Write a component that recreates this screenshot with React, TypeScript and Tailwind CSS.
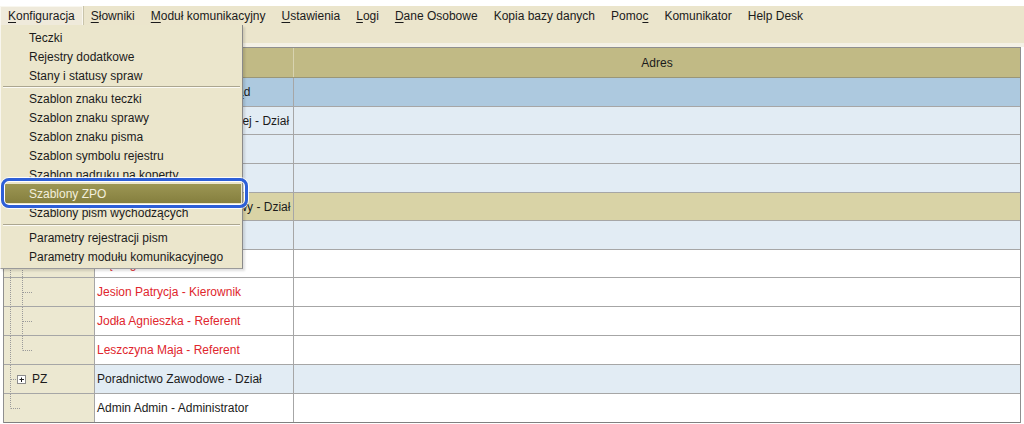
import React from "react";

type Row = {
    h: string;
    bg: string;
    text: string;
    red?: boolean;
    tree?: "child" | "lastChild" | "node" | "last" | "none";
    label?: string;
};

const rows: Row[] = [
    { h: "h-[29px]", bg: "bg-[#adc9df]", text: "Grodzki Urząd Pracy - Urząd" },
    { h: "h-[28px]", bg: "bg-[#e2ecf4]", text: "Centrum Pomocy Społecznej - Dział" },
    { h: "h-[29px]", bg: "bg-[#e2ecf4]", text: "Kowalski Jan - Kierownik" },
    { h: "h-[29px]", bg: "bg-[#e2ecf4]", text: "Nowak Anna - Referent" },
    { h: "h-[28px]", bg: "bg-[#d9d3a6]", text: "Referat Finansowo-Księgowy - Dział" },
    { h: "h-[29px]", bg: "bg-[#e2ecf4]", text: "Lis Marek - Referent" },
    { h: "h-[28px]", bg: "bg-white", text: "Dąb Agata - Referent", red: true, tree: "child" },
    { h: "h-[29px]", bg: "bg-white", text: "Jesion Patrycja - Kierownik", red: true, tree: "child" },
    { h: "h-[29px]", bg: "bg-white", text: "Jodła Agnieszka - Referent", red: true, tree: "child" },
    { h: "h-[29px]", bg: "bg-white", text: "Leszczyna Maja - Referent", red: true, tree: "lastChild" },
    { h: "h-[29px]", bg: "bg-[#e2ecf4]", text: "Poradnictwo Zawodowe - Dział", tree: "node", label: "PZ" },
    { h: "h-[29px]", bg: "bg-white", text: "Admin Admin - Administrator", tree: "last" },
];

const menuBar = [
    { pre: "", key: "K", post: "onfiguracja", active: true },
    { pre: "", key: "S", post: "łowniki" },
    { pre: "", key: "M", post: "oduł komunikacyjny" },
    { pre: "", key: "U", post: "stawienia" },
    { pre: "", key: "L", post: "ogi" },
    { pre: "", key: "D", post: "ane Osobowe" },
    { pre: "Kopia bazy danych", key: "", post: "" },
    { pre: "Pomo", key: "c", post: "" },
    { pre: "Komunikator", key: "", post: "" },
    { pre: "Help Desk", key: "", post: "" },
];

const groups = [
    ["Teczki", "Rejestry dodatkowe", "Stany i statusy spraw"],
    [
        "Szablon znaku teczki",
        "Szablon znaku sprawy",
        "Szablon znaku pisma",
        "Szablon symbolu rejestru",
        "Szablon nadruku na koperty",
        "Szablony ZPO",
        "Szablony pism wychodzących",
    ],
    ["Parametry rejestracji pism", "Parametry modułu komunikacyjnego"],
];

function TreeLines({ kind, h }: { kind: Row["tree"]; h: number }) {
    const mid = Math.round(h / 2) + 0.5;
    const dot = { stroke: "#9a9a9a", strokeWidth: 1, strokeDasharray: "1 1" };
    return (
        <svg width="30" height={h} className="shrink-0">
            {(kind === "child" || kind === "lastChild" || kind === "node") && (
                <line x1="6.5" y1="0" x2="6.5" y2={h} {...dot} />
            )}
            {kind === "last" && <line x1="6.5" y1="0" x2="6.5" y2={mid} {...dot} />}
            {kind === "last" && <line x1="7" y1={mid} x2="17" y2={mid} {...dot} />}
            {kind === "child" && <line x1="18.5" y1="0" x2="18.5" y2={h} {...dot} />}
            {kind === "lastChild" && <line x1="18.5" y1="0" x2="18.5" y2={mid} {...dot} />}
            {(kind === "child" || kind === "lastChild") && (
                <line x1="19" y1={mid} x2="29" y2={mid} {...dot} />
            )}
            {kind === "node" && (
                <>
                    <line x1="7" y1={mid} x2="13" y2={mid} {...dot} />
                    <rect x="13.5" y={mid - 4} width="8" height="8" fill="white" stroke="#8c8c8c" />
                    <line x1="15.5" y1={mid} x2="20" y2={mid} stroke="#222" />
                    <line x1="17.5" y1={mid - 2} x2="17.5" y2={mid + 2.5} stroke="#222" />
                </>
            )}
        </svg>
    );
}

export default function App() {
    return (
        <div className="relative w-[1024px] h-[424px] overflow-hidden bg-white font-['Liberation_Sans',Arial,sans-serif] text-[12px] text-[#1b1b1b]">
            <div className="h-[6px]" />
            <div className="h-[37px] bg-[#ebe5cc]">
                <div className="flex h-[19px] items-center">
                    {menuBar.map((m, i) => (
                        <div
                            key={i}
                            className={
                                m.active
                                    ? "h-[19px] pl-[7px] pr-[7px] flex items-center bg-[#efeadb] border-l border-t border-r border-[#f9f7ef] shadow-[1px_0_0_#c9c4ab]"
                                    : "h-[19px] px-[8px] flex items-center"
                            }
                        >
                            <span className="whitespace-nowrap">
                                {m.pre}
                                {m.key && <span className="underline underline-offset-2">{m.key}</span>}
                                {m.post}
                            </span>
                        </div>
                    ))}
                </div>
            </div>
            <div className="h-[4px] bg-[#f4f1e6]" />

            <div className="ml-[3px] w-[1018px] border-l border-r border-t border-[#8f8f8f]">
                <div className="grid grid-cols-[91px_199px_1fr] h-[30px] bg-[#c1ba85] border-b border-[#9a9678]">
                    <div className="border-r border-[#a9a47e]" />
                    <div className="border-r border-[#d8d3b0]" />
                    <div className="flex items-center justify-center">Adres</div>
                </div>
                {rows.map((r, i) => {
                    const px = r.h === "h-[29px]" ? 28 : 27;
                    return (
                        <div
                            key={i}
                            className={`grid grid-cols-[91px_199px_1fr] border-b ${
                                i === rows.length - 1 ? "border-[#808080]" : "border-[#a6a6a6]"
                            } ${r.h}`}
                        >
                            <div className="bg-[#ece8d1] border-r border-[#a6a6a6] flex items-center">
                                {r.tree && <TreeLines kind={r.tree} h={px} />}
                                {r.label && <span className="ml-[-2px]">{r.label}</span>}
                            </div>
                            <div className={`${r.bg} border-r border-[#a6a6a6] flex items-center pl-[2px] overflow-hidden`}>
                                <span className={`whitespace-nowrap ${r.red ? "text-[#e0262d]" : ""}`}>{r.text}</span>
                            </div>
                            <div className={r.bg} />
                        </div>
                    );
                })}
            </div>

            {/* Konfiguracja dropdown */}
            <div className="absolute left-0 top-[25px] w-[243px] bg-[#ebe6cc] border-l border-[#f8f6ee] border-r border-b border-r-[#8a8a8a] border-b-[#9a9a9a] shadow-[2px_2px_2px_rgba(0,0,0,0.12)] pt-[3px] pb-[2px]">
                {groups.map((g, gi) => (
                    <div key={gi}>
                        {gi > 0 && (
                            <div className={`${gi === 1 ? "h-[4px]" : "h-[6px]"} flex flex-col justify-center px-[2px]`}>
                                <div className="h-px bg-[#aba690]" />
                                <div className="h-px bg-[#fbfaf4]" />
                            </div>
                        )}
                        {g.map((item) =>
                            item === "Szablony ZPO" ? (
                                <div
                                    key={item}
                                    className="h-[19px] ml-[4px] mr-[1px] flex items-center pl-[24px] text-[#f3efdc] bg-gradient-to-b from-[#9c9654] to-[#857f3e]"
                                >
                                    {item}
                                </div>
                            ) : (
                                <div key={item} className="h-[19px] flex items-center pl-[28px]">
                                    {item}
                                </div>
                            )
                        )}
                    </div>
                ))}
            </div>

            {/* highlight annotation */}
            <div className="absolute left-[1px] top-[178px] w-[247px] h-[30px] rounded-[8px] border-[3px] border-[#2d5fd8] shadow-[0_0_0_1px_rgba(255,255,255,0.9),inset_0_0_0_1px_#ffffff]" />
        </div>
    );
}
